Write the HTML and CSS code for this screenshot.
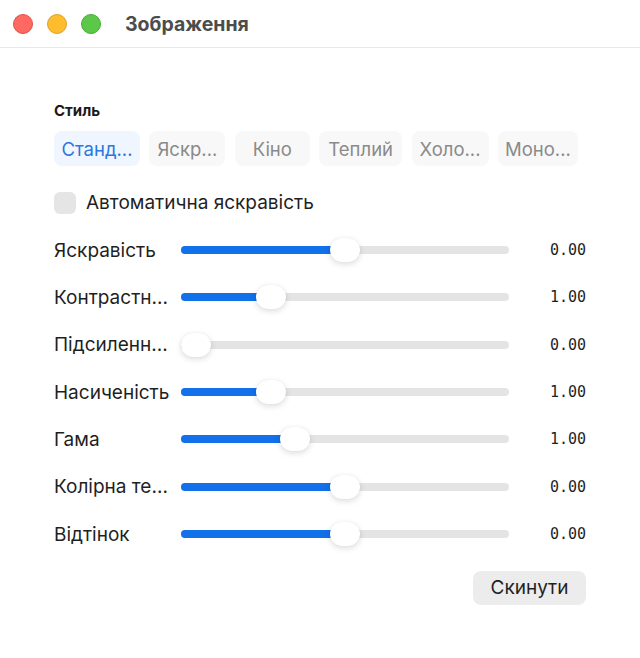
FILE: index.html
```html
<!DOCTYPE html>
<html lang="uk">
<head>
  <meta charset="UTF-8">
  <meta name="viewport" content="width=device-width, initial-scale=1.0">
  <title>Зображення</title>
  <link rel="stylesheet" href="styles.css">
</head>
<body>
  <div class="titlebar">
    <div class="lights">
      <span class="light red"></span>
      <span class="light yellow"></span>
      <span class="light green"></span>
    </div>
    <div class="window-title">Зображення</div>
  </div>

  <div class="content">
    <div class="section-label">Стиль</div>
    <div class="tabs">
      <div class="tab active">Станд...</div>
      <div class="tab">Яскр...</div>
      <div class="tab">Кіно</div>
      <div class="tab">Теплий</div>
      <div class="tab">Холо...</div>
      <div class="tab">Моно...</div>
    </div>

    <label class="check-row">
      <span class="checkbox"></span>
      <span>Автоматична яскравість</span>
    </label>

    <div class="sliders">
      <div class="row">
        <div class="label">Яскравість</div>
        <div class="track" style="--p:0.5"><div class="fill"></div><div class="thumb"></div></div>
        <div class="value">0.00</div>
      </div>
      <div class="row">
        <div class="label">Контрастн...</div>
        <div class="track" style="--p:0.25"><div class="fill"></div><div class="thumb"></div></div>
        <div class="value">1.00</div>
      </div>
      <div class="row">
        <div class="label">Підсиленн...</div>
        <div class="track" style="--p:0"><div class="fill"></div><div class="thumb"></div></div>
        <div class="value">0.00</div>
      </div>
      <div class="row">
        <div class="label">Насиченість</div>
        <div class="track" style="--p:0.25"><div class="fill"></div><div class="thumb"></div></div>
        <div class="value">1.00</div>
      </div>
      <div class="row">
        <div class="label">Гама</div>
        <div class="track" style="--p:0.333"><div class="fill"></div><div class="thumb"></div></div>
        <div class="value">1.00</div>
      </div>
      <div class="row">
        <div class="label">Колірна те...</div>
        <div class="track" style="--p:0.5"><div class="fill"></div><div class="thumb"></div></div>
        <div class="value">0.00</div>
      </div>
      <div class="row">
        <div class="label">Відтінок</div>
        <div class="track" style="--p:0.5"><div class="fill"></div><div class="thumb"></div></div>
        <div class="value">0.00</div>
      </div>
    </div>

    <div class="actions">
      <button class="reset">Скинути</button>
    </div>
  </div>
</body>
</html>
```

FILE: styles.css
```css
body {
  margin: 0;
  background: #ffffff;
  font-family: Inter, "Noto Sans", sans-serif;
  color: #1f1f1f;
}

.titlebar {
  height: 47px;
  display: flex;
  align-items: center;
  border-bottom: 1px solid #e8e8e8;
}
.lights {
  display: flex;
  gap: 14px;
  padding-left: 13px;
}
.light {
  width: 20px;
  height: 20px;
  border-radius: 50%;
  box-sizing: border-box;
}
.red { background: #fe6a62; border: 1px solid #e0504a; }
.yellow { background: #fdbd2f; border: 1px solid #dea227; }
.green { background: #5cc84a; border: 1px solid #47ab35; }
.window-title {
  margin-left: 24px;
  font-size: 19.5px;
  font-weight: 700;
  color: #4c4c4c;
}

.content {
  padding: 54px 54px 0 54px;
}
.section-label {
  font-size: 15px;
  font-weight: 700;
  line-height: 18px;
  color: #1a1a1a;
}
.tabs {
  display: grid;
  grid-template-columns: 86px 76px 75px 83px 77px 80px;
  column-gap: 9.4px;
  margin-top: 11px;
}
.tab {
  height: 35px;
  display: flex;
  align-items: center;
  justify-content: center;
  border-radius: 8px;
  background: #f8f8f8;
  font-size: 18.5px;
  color: #8a8a8a;
  white-space: nowrap;
}
.tab.active {
  background: #f0f6ff;
  color: #2a78df;
}

.check-row {
  display: flex;
  align-items: center;
  gap: 10px;
  margin-top: 25px;
  font-size: 19px;
  color: #1f1f1f;
}
.checkbox {
  width: 22px;
  height: 22px;
  border-radius: 6px;
  background: #e5e5e5;
}

.sliders {
  margin-top: 12.5px;
}
.row {
  height: 47.33px;
  display: grid;
  grid-template-columns: 127px 328px 1fr;
  align-items: center;
}
.label {
  font-size: 19px;
  white-space: nowrap;
  overflow: hidden;
}
.track {
  position: relative;
  height: 8px;
  border-radius: 4px;
  background: #e4e4e4;
}
.fill {
  height: 8px;
  border-radius: 4px;
  background: #1170ea;
  width: calc(var(--p) * (100% - 30px) + 15px);
}
.thumb {
  position: absolute;
  top: -8px;
  left: calc(var(--p) * (100% - 30px));
  width: 30px;
  height: 24px;
  border-radius: 12px;
  background: #ffffff;
  box-shadow: 0 2px 6px rgba(0, 0, 0, 0.14), 0 0 1px rgba(0, 0, 0, 0.1);
}
.value {
  text-align: right;
  font-family: "DejaVu Sans Mono", "Liberation Mono", monospace;
  font-size: 15px;
  color: #1f1f1f;
}

.actions {
  display: flex;
  justify-content: flex-end;
  margin-top: 13px;
}
.reset {
  width: 113px;
  height: 34px;
  border: none;
  border-radius: 8px;
  background: #ececec;
  font-family: Inter, "Noto Sans", sans-serif;
  font-size: 19px;
  color: #1f1f1f;
}
```
